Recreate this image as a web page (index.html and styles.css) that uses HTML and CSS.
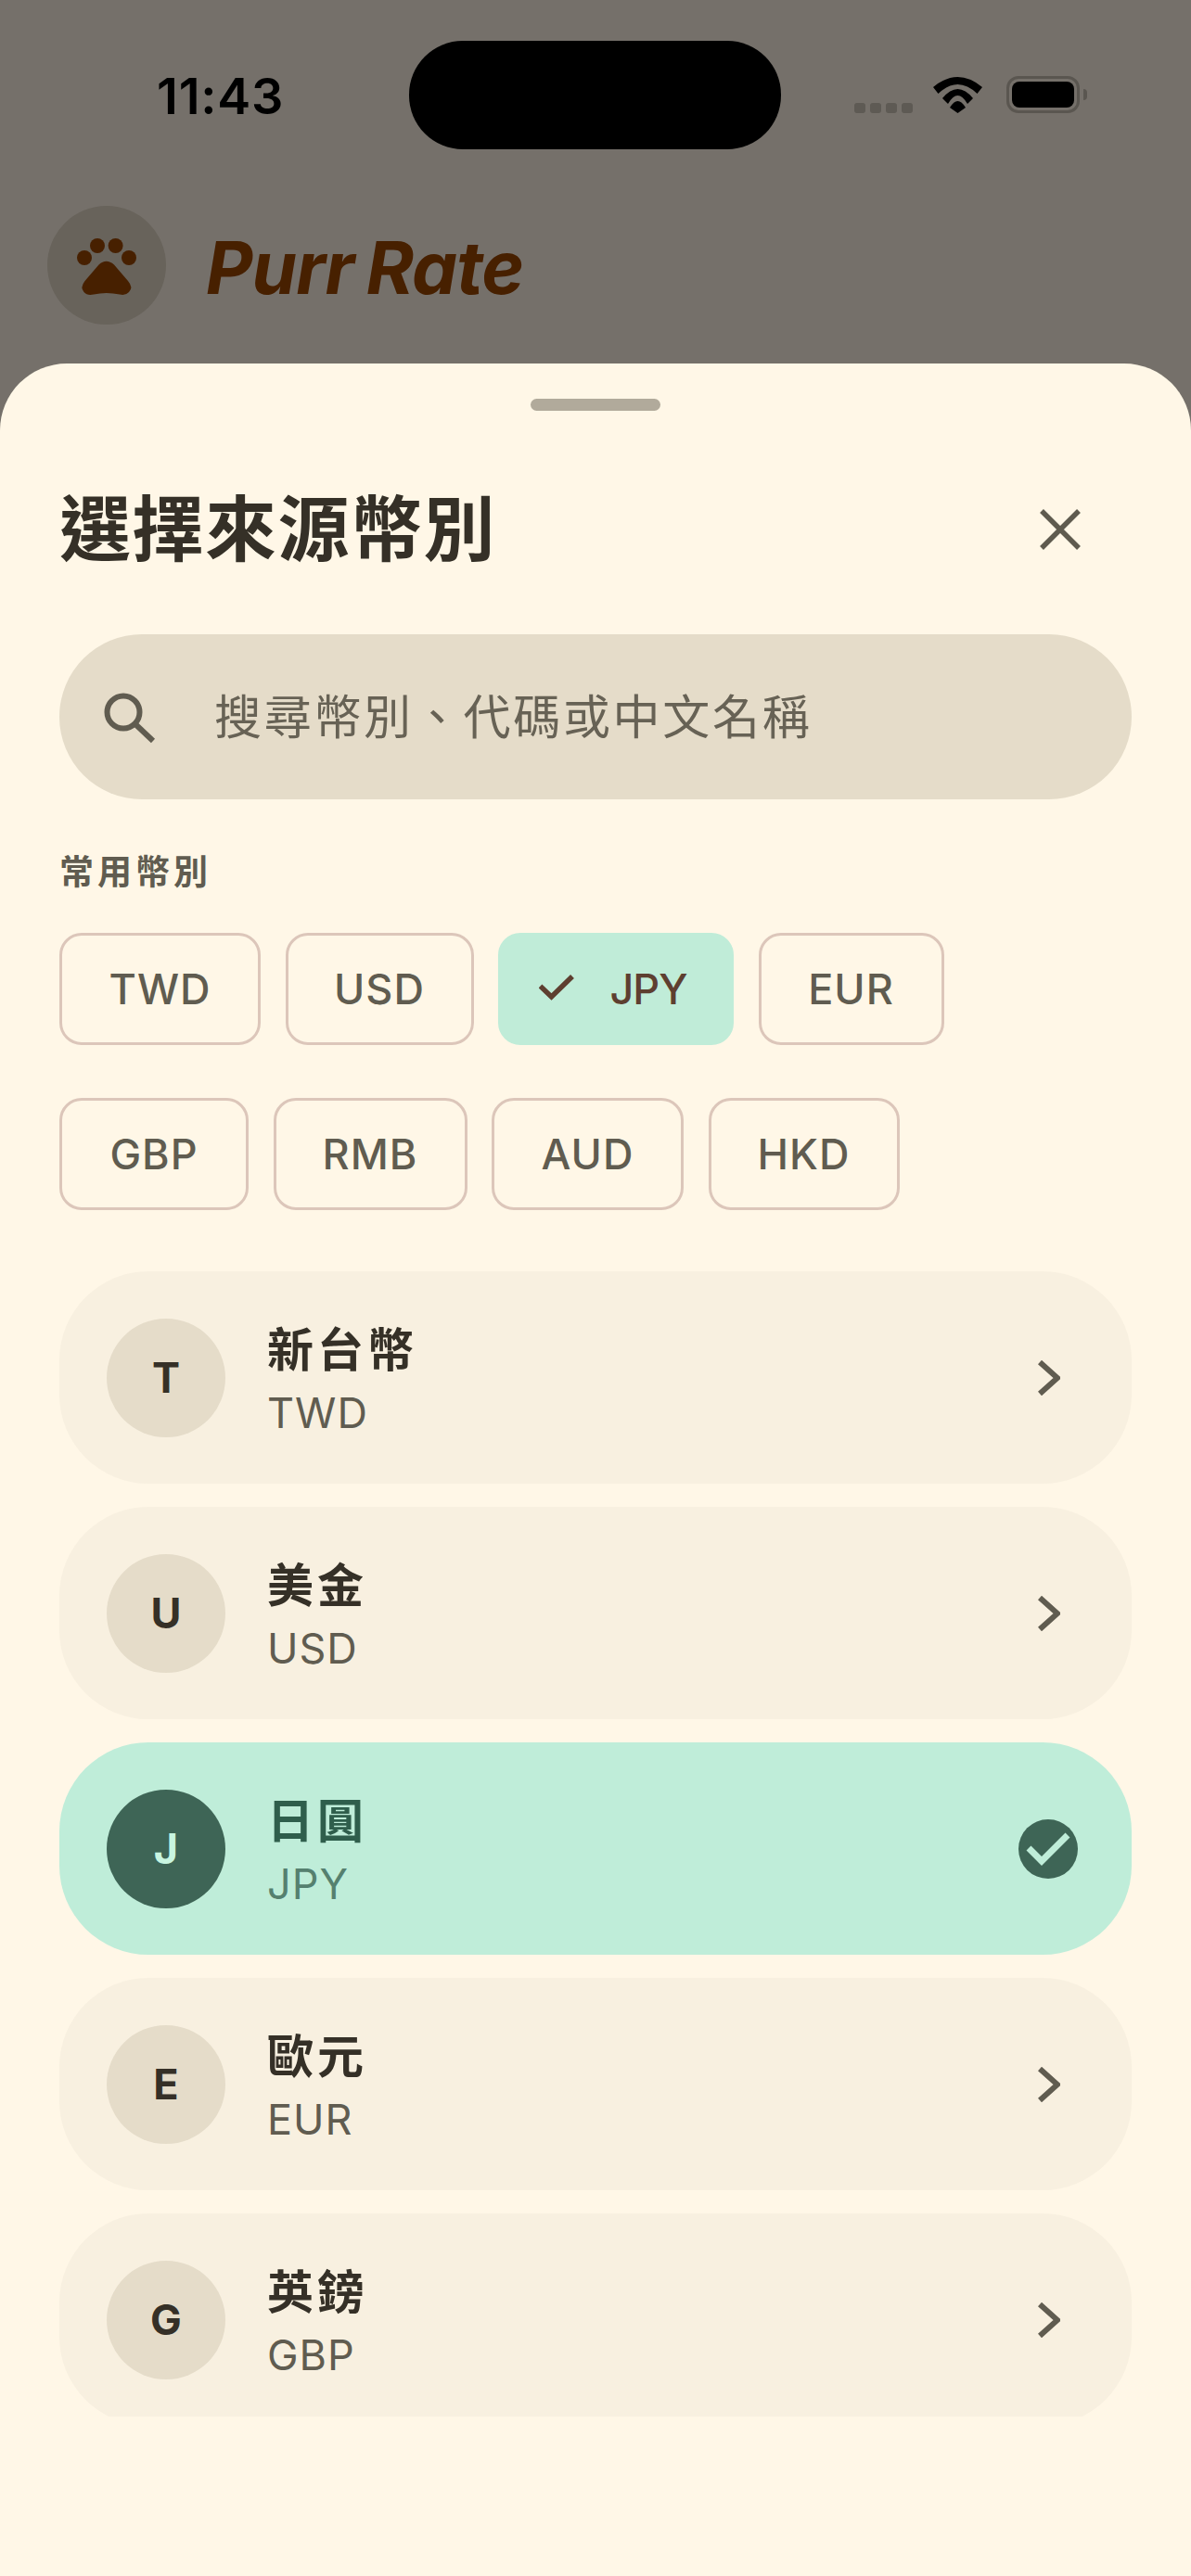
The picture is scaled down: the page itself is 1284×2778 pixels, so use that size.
FILE: index.html
```html
<!DOCTYPE html>
<html lang="zh-Hant">
<head>
<meta charset="utf-8">
<title>Purr Rate</title>
<link rel="stylesheet" href="styles.css">
</head>
<body>
<div class="app">
  <header class="status">
    <div class="time">11:43</div>
    <div class="island"></div>
    <div class="status-icons">
      <div class="signal"><i></i><i></i><i></i><i></i></div>
      <svg class="wifi" width="53" height="39" viewBox="0 0 53 39"><path d="M0 11Q26.500-11 53 11L47.500 18Q26.500-2 5.500 18Z"/><path d="M10 23Q26.500 3 43 23L37 29Q26.500 11 16 29Z"/><path d="M18 33Q26.500 19 35 33L26.500 39Z"/></svg>
      <div class="battery"><div class="battery-fill"></div></div>
      <div class="battery-nub"></div>
    </div>
  </header>

  <div class="appbar">
    <div class="logo">
      <svg width="128" height="128" viewBox="0 0 128 128"><circle cx="40" cy="56" r="8"/><circle cx="54" cy="43" r="8"/><circle cx="73.600" cy="43" r="8"/><circle cx="88" cy="56" r="8"/><path d="M55.500 63.500Q63.600 56 72 63.500L87 81Q93 88 88 93Q84.500 97 78 95.500Q63.600 92.500 50 95.500Q43 97 39.500 93Q35 88 40.500 81Z"/></svg>
    </div>
    <div class="brand">Purr Rate</div>
  </div>

  <main class="sheet">
    <div class="handle"></div>
    <div class="sheet-head">
      <h1 class="title">選擇來源幣別</h1>
      <svg class="close" width="44" height="44" viewBox="0 0 44 44"><path d="M2 2L42 42M42 2L2 42"/></svg>
    </div>

    <div class="search">
      <svg class="search-icon" width="58" height="56" viewBox="0 0 58 56"><circle cx="22" cy="22" r="17.500"/><path d="M35 35L54 53"/></svg>
      <span class="placeholder">搜尋幣別、代碼或中文名稱</span>
    </div>

    <div class="section-label">常用幣別</div>

    <div class="chips">
      <div class="chip-row">
        <div class="chip chip-twd">TWD</div>
        <div class="chip chip-usd">USD</div>
        <div class="chip chip-jpy is-on">
          <svg class="chip-check" width="38" height="28" viewBox="0 0 38 28"><path d="M1.500 12.500L13.500 24L36 2"/></svg>
          JPY
        </div>
        <div class="chip chip-eur">EUR</div>
      </div>
      <div class="chip-row">
        <div class="chip chip-gbp">GBP</div>
        <div class="chip chip-rmb">RMB</div>
        <div class="chip chip-aud">AUD</div>
        <div class="chip chip-hkd">HKD</div>
      </div>
    </div>

    <div class="list">
      <div class="row">
        <div class="avatar">T</div>
        <div class="row-text"><div class="name">新台幣</div><div class="code">TWD</div></div>
        <svg class="chevron" width="24" height="38" viewBox="0 0 24 38"><path d="M2 2L21 19L2 36"/></svg>
      </div>
      <div class="row">
        <div class="avatar">U</div>
        <div class="row-text"><div class="name">美金</div><div class="code">USD</div></div>
        <svg class="chevron" width="24" height="38" viewBox="0 0 24 38"><path d="M2 2L21 19L2 36"/></svg>
      </div>
      <div class="row is-on">
        <div class="avatar">J</div>
        <div class="row-text"><div class="name">日圓</div><div class="code">JPY</div></div>
        <svg class="row-check" width="64" height="64" viewBox="0 0 64 64"><circle cx="32" cy="32" r="32"/><path d="M11 31L25 45L53 17"/></svg>
      </div>
      <div class="row">
        <div class="avatar">E</div>
        <div class="row-text"><div class="name">歐元</div><div class="code">EUR</div></div>
        <svg class="chevron" width="24" height="38" viewBox="0 0 24 38"><path d="M2 2L21 19L2 36"/></svg>
      </div>
      <div class="row">
        <div class="avatar">G</div>
        <div class="row-text"><div class="name">英鎊</div><div class="code">GBP</div></div>
        <svg class="chevron" width="24" height="38" viewBox="0 0 24 38"><path d="M2 2L21 19L2 36"/></svg>
      </div>
    </div>
  </main>
</div>
</body>
</html>
```

FILE: styles.css
```css
* { box-sizing: border-box; }
html, body { margin: 0; padding: 0; }
body { font-family: Inter, "Noto Sans CJK TC", sans-serif; }

.app {
  width: 1284px;
  height: 2778px;
  overflow: hidden;
  background: #75706a;
  display: flex;
  flex-direction: column;
}

/* status bar */
.status {
  display: grid;
  grid-template-columns: 441px 401px 1fr;
  align-items: center;
  height: 117px;
  margin-top: 44px;
  flex: none;
}
.time {
  padding-left: 169px;
  font-size: 54px;
  font-weight: 600;
  line-height: 60px;
  color: #000;
  letter-spacing: 0.8px;
  position: relative;
  top: 1px;
}
.island { height: 117px; background: #000; border-radius: 58px; }
.status-icons {
  display: flex;
  align-items: flex-end;
  padding-left: 79px;
  height: 40px;
  margin-top: -2px;
}
.signal { display: flex; gap: 5.500px; margin-right: 22px; }
.signal i { width: 11.500px; height: 11px; border-radius: 3px; background: #5e5a54; display: block; }
.wifi { display: block; fill: #000; margin-right: 26px; }
.battery {
  width: 79px;
  height: 40px;
  border: 3.500px solid #5a5650;
  border-radius: 13px;
  padding: 3px;
}
.battery-fill { width: 100%; height: 100%; background: #000; border-radius: 8px; }
.battery-nub {
  width: 4px;
  height: 12px;
  background: #5a5650;
  border-radius: 0 6px 6px 0;
  margin: 0 0 14px 4px;
}

/* app bar */
.appbar {
  display: flex;
  align-items: center;
  gap: 43px;
  height: 128px;
  margin-top: 61px;
  padding-left: 51px;
  flex: none;
}
.logo { width: 128px; height: 128px; border-radius: 50%; background: #68635b; flex: none; }
.logo svg { display: block; fill: #472000; }
.brand {
  font-size: 78px;
  font-weight: 700;
  font-style: italic;
  line-height: 90px;
  color: #472000;
  letter-spacing: -1px;
  word-spacing: -4px;
  position: relative;
  top: 3px;
}

/* sheet */
.sheet {
  flex: 1;
  margin-top: 42px;
  background: #fff7e7;
  border-radius: 72px 72px 0 0;
  padding: 38px 64px 0;
  display: flex;
  flex-direction: column;
  min-height: 0;
}
.handle { width: 140px; height: 13px; border-radius: 7px; background: #b1aa9b; align-self: center; flex: none; }
.sheet-head {
  display: flex;
  align-items: center;
  justify-content: space-between;
  height: 90px;
  margin-top: 83px;
  padding-right: 55px;
  flex: none;
}
.title {
  margin: 0;
  font-size: 77px;
  font-weight: 700;
  line-height: 90px;
  color: #353027;
  letter-spacing: 1.500px;
}
.close { display: block; stroke: #5f5b4f; stroke-width: 5.500px; fill: none; }

.search {
  display: flex;
  align-items: center;
  gap: 62px;
  height: 178px;
  margin-top: 68px;
  padding-left: 47px;
  background: #e5dcc9;
  border-radius: 89px;
  flex: none;
}
.search-icon { display: block; fill: none; stroke: #605c50; stroke-width: 6px; flex: none; position: relative; top: 1px; }
.placeholder { font-size: 51px; line-height: 60px; letter-spacing: 2.700px; color: #676255; position: relative; top: 1px; }

.section-label {
  margin-top: 57px;
  font-size: 37px;
  font-weight: 600;
  line-height: 44px;
  letter-spacing: 4px;
  color: #605c50;
  flex: none;
}

.chips { display: flex; flex-direction: column; gap: 57px; margin-top: 43px; flex: none; }
.chip-row { display: flex; gap: 26.500px; }
.chip {
  display: flex;
  align-items: center;
  justify-content: center;
  height: 121px;
  border: 3px solid #dcc6ba;
  border-radius: 24px;
  font-size: 45px;
  font-weight: 500;
  letter-spacing: 1px;
  color: #605c50;
  flex: none;
}
.chip-twd { width: 217px; }
.chip-usd { width: 203px; }
.chip-eur { width: 200px; }
.chip-gbp { width: 204px; }
.chip-rmb { width: 209px; }
.chip-aud { width: 207px; }
.chip-hkd { width: 206px; }
.chip-jpy { width: 254px; letter-spacing: -1px; padding-right: 6px; }
.chip.is-on { background: #c0ecd8; border-color: #c0ecd8; color: #5e3f30; gap: 38px; }
.chip-check { display: block; fill: none; stroke: #5e3f30; stroke-width: 5.500px; position: relative; top: -2px; }

/* list */
.list {
  display: flex;
  flex-direction: column;
  gap: 25px;
  margin-top: 66px;
  height: 1235px;
  overflow: hidden;
  flex: none;
}
.row {
  display: flex;
  align-items: center;
  height: 229px;
  padding: 0 77px 0 51px;
  background: #f8f0e0;
  border-radius: 96px;
  flex: none;
}
.avatar {
  display: flex;
  align-items: center;
  justify-content: center;
  width: 128px;
  height: 128px;
  border-radius: 50%;
  background: #e5dcc9;
  color: #353027;
  font-size: 45px;
  font-weight: 700;
  flex: none;
}
.row-text { flex: 1; margin-left: 45px; padding-top: 5px; }
.name {
  font-size: 50px;
  font-weight: 600;
  line-height: 66px;
  letter-spacing: 4px;
  color: #353027;
}
.code {
  margin-top: 5px;
  font-size: 45px;
  line-height: 60px;
  letter-spacing: 1px;
  color: #605c50;
}
.chevron { display: block; fill: none; stroke: #605c50; stroke-width: 6px; }
.row.is-on { background: #bfedd9; }
.row.is-on .avatar { background: #3e6556; color: #c8f5e0; }
.row.is-on .name { color: #2f5e4c; }
.row.is-on .code { color: #55806f; }
.row-check { display: block; margin-right: -19px; }
.row-check circle { fill: #3e6556; }
.row-check path { fill: none; stroke: #bfedd9; stroke-width: 7px; }
```
